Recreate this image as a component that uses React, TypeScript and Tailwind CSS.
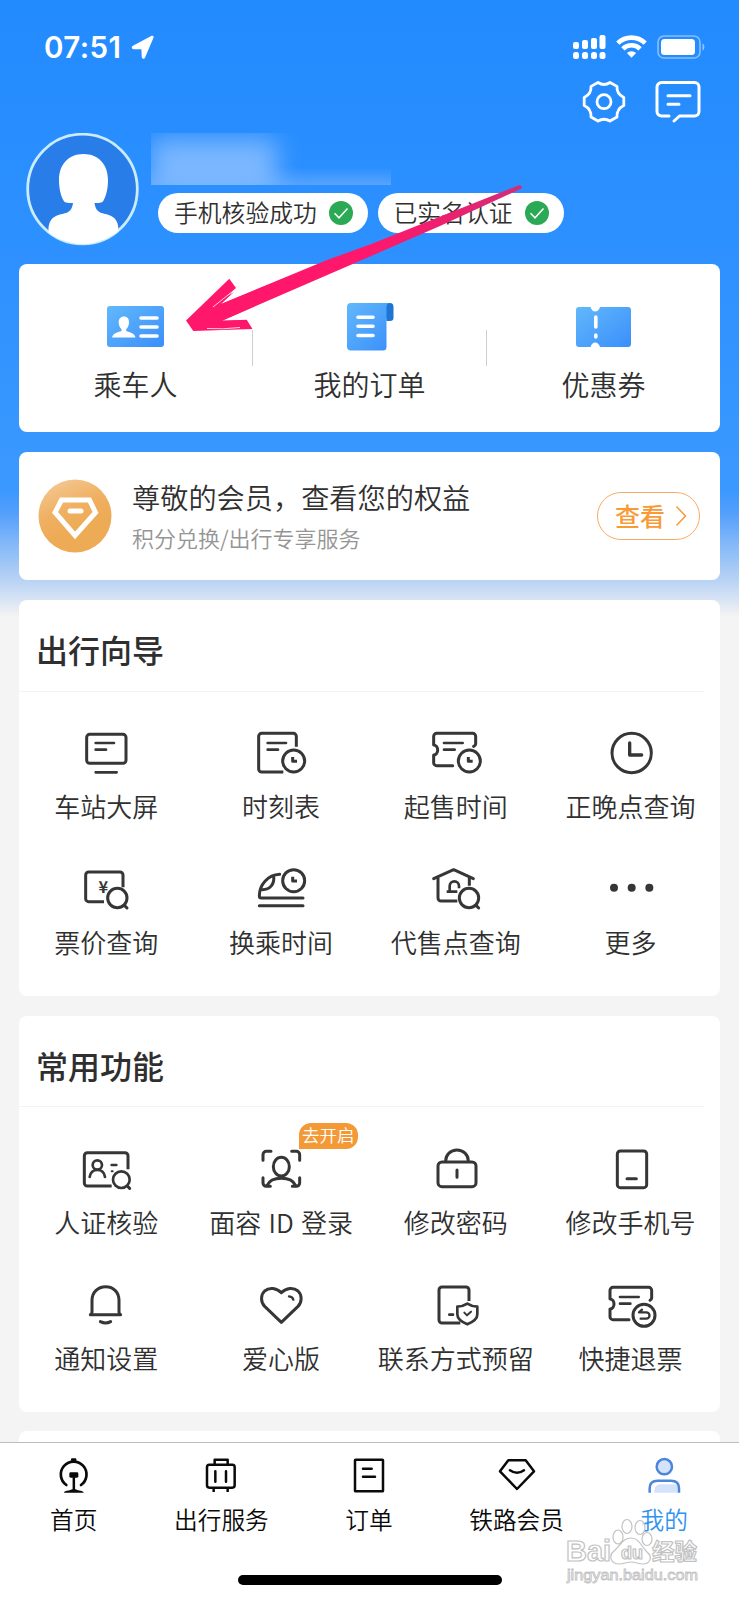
import React from 'react';

interface IconItem {
    label: string;
    icon: React.ReactNode;
    badge?: string;
}

const FONT = "font-['Noto_Sans_CJK_SC',sans-serif]";

/* ---------- Line icons of the feature grids ---------- */

const GridIcon: React.FC<{ children: React.ReactNode }> = ({ children }) => (
    <svg
        className="h-14 w-16 shrink-0"
        viewBox="0 0 192 168"
        fill="none"
        stroke="#363636"
        strokeWidth="9"
        strokeLinecap="round"
        strokeLinejoin="round"
    >
        {children}
    </svg>
);

const SmallClock: React.FC<{ cx: number; cy: number }> = ({ cx, cy }) => (
    <>
        <circle cx={cx} cy={cy} r="33" />
        <path d={`M${cx - 3} ${cy - 12}v13h13`} strokeLinecap="butt" />
    </>
);

const StationIcon = () => (
    <GridIcon>
        <rect x="38" y="28" width="118" height="87" rx="9" />
        <path strokeWidth="8" d="M65 54h55M65 74h31M65 142h63" />
    </GridIcon>
);

const TimetableIcon = () => (
    <GridIcon>
        <path strokeLinecap="butt" d="M142 65V34a9 9 0 0 0-9-9H38a9 9 0 0 0-9 9v98a9 9 0 0 0 9 9h65" />
        <path strokeWidth="8" d="M56 54h55M56 74h31" />
        <SmallClock cx={134} cy={108} />
    </GridIcon>
);

const SaleTimeIcon = () => (
    <GridIcon>
        <path d="M86 122H38a9 9 0 0 1-9-9V90C45 89 45 61 29 60V34a9 9 0 0 1 9-9h108a9 9 0 0 1 9 9v23q0 4-6 7" />
        <path strokeWidth="8" d="M60 54h56M60 74h32" />
        <SmallClock cx={136} cy={108} />
    </GridIcon>
);

const ClockIcon = () => (
    <GridIcon>
        <circle cx="98" cy="84" r="59" />
        <path strokeWidth="10" d="M92 54v36h36" />
    </GridIcon>
);

const PriceIcon = () => (
    <GridIcon>
        <path strokeLinecap="butt" d="M147 79V42a9 9 0 0 0-9-9H44a9 9 0 0 0-9 9v71a9 9 0 0 0 9 9h46" />
        <text
            x="88"
            y="95"
            textAnchor="middle"
            fontSize="49"
            fontWeight="700"
            fill="#363636"
            stroke="none"
            className="font-['Noto_Sans_CJK_SC',sans-serif]"
        >
            ¥
        </text>
        <circle cx="130" cy="111" r="29" />
        <path d="M151 133l8 8" />
    </GridIcon>
);

const TrainIcon = () => (
    <GridIcon>
        <path d="M92 40C56 42 31 72 31 104q0 7 6 7h125M31 134h131" />
        <path d="M74 46c3 22-10 41-36 40" />
        <SmallClock cx={134} cy={59} />
    </GridIcon>
);

const AgencyIcon = () => (
    <GridIcon>
        <path d="M29 53l60-27 59 27" />
        <path strokeLinecap="butt" d="M42 50v61a9 9 0 0 0 9 9h49M136 50v24" />
        <path strokeWidth="8" strokeLinecap="butt" d="M68 92h32M77 90V75a14 14 0 0 1 28 0v7" />
        <circle cx="135" cy="111" r="29" />
        <path d="M156 133l8 8" />
    </GridIcon>
);

const MoreIcon = () => (
    <GridIcon>
        <g fill="#363636" stroke="none">
            <circle cx="45" cy="80" r="12" />
            <circle cx="98" cy="80" r="12" />
            <circle cx="151" cy="80" r="12" />
        </g>
    </GridIcon>
);

const IdCheckIcon = () => (
    <GridIcon>
        <path strokeLinecap="butt" d="M162 85V44a9 9 0 0 0-9-9H40a9 9 0 0 0-9 9v82a9 9 0 0 0 9 9h73" />
        <circle cx="70" cy="72" r="14" strokeWidth="8" />
        <path strokeWidth="8" d="M47 108c2-13 11-21 23-21s21 8 23 21M113 72h14" />
        <path strokeWidth="6" d="M113 91h3" />
        <circle cx="142" cy="116" r="25" strokeWidth="8" />
        <path d="M160 135l7 7" />
    </GridIcon>
);

const FaceIdIcon = () => (
    <GridIcon>
        <path d="M42 58V41a10 10 0 0 1 10-10h14M128 31h14a10 10 0 0 1 10 10v17M42 110v16a10 10 0 0 0 10 10h12M130 136h12a10 10 0 0 0 10-10v-16" />
        <ellipse cx="97" cy="77" rx="24" ry="28" />
        <path d="M54 134c6-14 22-22 43-22s37 8 43 22" />
    </GridIcon>
);

const LockIcon = () => (
    <GridIcon>
        <rect x="42" y="63" width="114" height="74" rx="12" />
        <path d="M65 60c0-19 15-33 34-33s34 14 34 33M99 87v22" />
    </GridIcon>
);

const PhoneIcon = () => (
    <GridIcon>
        <rect x="55" y="30" width="88" height="110" rx="9" />
        <path d="M84 113h28" />
    </GridIcon>
);

const BellIcon = () => (
    <GridIcon>
        <path d="M49 113c3-1 5-4 5-9V70c0-23 17-41 41-41s40 18 40 41v34c0 5 2 8 5 9zM79 134q16 8 31 0" />
    </GridIcon>
);

const HeartIcon = () => (
    <GridIcon>
        <path d="M97 136L47 88C34 75 35 53 47 42c14-12 35-10 50 5 15-15 36-17 50-5 12 11 13 33 0 46z" />
        <path strokeWidth="7" d="M120 58q11 1 13 10" />
    </GridIcon>
);

const ContactIcon = () => (
    <GridIcon>
        <path strokeLinecap="butt" d="M135 72V39a9 9 0 0 0-9-9H54a9 9 0 0 0-9 9v90a9 9 0 0 0 9 9h55" />
        <path strokeWidth="8" d="M76 113h11" />
        <path strokeWidth="8" d="M130 80q14 9 30 9v23q0 18-30 30-30-12-30-30V89q16 0 30-9z" />
        <path strokeWidth="6" d="M121 107l8 8 12-11" />
    </GridIcon>
);

const RefundIcon = () => (
    <GridIcon>
        <path d="M90 128H42a9 9 0 0 1-9-9V96c16-1 16-29 0-30V40a9 9 0 0 1 9-9h107a9 9 0 0 1 9 9v23q0 4-5 7" />
        <path strokeWidth="8" d="M63 60h56M63 80h31" />
        <circle cx="135" cy="115" r="33" />
        <path strokeWidth="7" d="M120 106h22a9 9 0 0 1 0 19h-17M120 106l9-8" />
    </GridIcon>
);

/* ---------- Tab bar icons ---------- */

const TabIcon: React.FC<{ children: React.ReactNode }> = ({ children }) => (
    <svg
        className="h-10 w-12 shrink-0"
        viewBox="0 0 144 120"
        fill="none"
        stroke="#0a0a0a"
        strokeWidth="7.500"
        strokeLinecap="round"
        strokeLinejoin="round"
    >
        {children}
    </svg>
);

const HomeTab = () => (
    <TabIcon>
        <path strokeWidth="8" d="M49 90A38.500 38.500 0 1 1 93 90" />
        <rect x="63" y="10" width="16" height="9" rx="3" fill="#0a0a0a" stroke="none" />
        <rect x="58" y="52" width="27" height="16" rx="4" fill="#0a0a0a" stroke="none" />
        <path d="M71.500 66v40" />
        <path fill="#0a0a0a" stroke="none" d="M42 113c0-6 16-5 24-10h11c8 5 24 4 24 10z" />
    </TabIcon>
);

const LuggageTab = () => (
    <TabIcon>
        <rect x="30" y="29" width="83" height="69" rx="7" />
        <path d="M53 28V14h39v14M55 49v31M87 49v31" />
        <path strokeLinecap="butt" d="M50 99v12M92 99v12" />
    </TabIcon>
);

const OrderTab = () => (
    <TabIcon>
        <rect x="30" y="14" width="84" height="95" rx="2" />
        <path d="M54 41h26M54 65h36" />
    </TabIcon>
);

const DiamondTab = () => (
    <TabIcon>
        <path d="M46 16h52l25 33-51 53L21 49z" />
        <path d="M51 46q21 15 42 0" />
    </TabIcon>
);

const MineTab = () => (
    <TabIcon>
        <g stroke="#4a86dc">
            <circle cx="73" cy="35" r="23" fill="#d5e3fa" />
            <path fill="#d5e3fa" stroke="none" d="M43 113v-8q2-17 20-17h50v25z" />
            <path strokeLinecap="butt" d="M29 113V99q0-22 24-22h40q24 0 24 22v14" />
        </g>
    </TabIcon>
);

/* ---------- Data ---------- */

const guideItems: IconItem[] = [
    { label: '车站大屏', icon: <StationIcon /> },
    { label: '时刻表', icon: <TimetableIcon /> },
    { label: '起售时间', icon: <SaleTimeIcon /> },
    { label: '正晚点查询', icon: <ClockIcon /> },
    { label: '票价查询', icon: <PriceIcon /> },
    { label: '换乘时间', icon: <TrainIcon /> },
    { label: '代售点查询', icon: <AgencyIcon /> },
    { label: '更多', icon: <MoreIcon /> },
];

const commonItems: IconItem[] = [
    { label: '人证核验', icon: <IdCheckIcon /> },
    { label: '面容 ID 登录', icon: <FaceIdIcon />, badge: '去开启' },
    { label: '修改密码', icon: <LockIcon /> },
    { label: '修改手机号', icon: <PhoneIcon /> },
    { label: '通知设置', icon: <BellIcon /> },
    { label: '爱心版', icon: <HeartIcon /> },
    { label: '联系方式预留', icon: <ContactIcon /> },
    { label: '快捷退票', icon: <RefundIcon /> },
];

const tabs: IconItem[] = [
    { label: '首页', icon: <HomeTab /> },
    { label: '出行服务', icon: <LuggageTab /> },
    { label: '订单', icon: <OrderTab /> },
    { label: '铁路会员', icon: <DiamondTab /> },
    { label: '我的', icon: <MineTab /> },
];

/* ---------- Header ---------- */

const StatusBar = () => (
    <div className="flex h-[72px] items-start justify-between pt-[29px] pr-[34px] pl-11 text-white">
        <div className="flex items-center gap-[9px]">
            <span className="font-['Inter',sans-serif] text-[29.500px] leading-9 font-[560] tracking-[0.400px]">07:51</span>
            <svg className="h-6 w-6" viewBox="0 0 24 24" fill="currentColor" stroke="currentColor" strokeWidth="1.500" strokeLinejoin="round">
                <path d="M22 1.500c.6-.3 1.100.2.900.8l-8.500 19.900c-.5 1.100-1.800.9-1.900-.3l-.4-8.300-8.500-.2c-1.300-.1-1.500-1.400-.3-1.900z" />
            </svg>
        </div>
        <div className="flex items-center pt-1.5">
            <svg className="h-6 w-[33px]" viewBox="0 0 33 24" fill="currentColor">
                <rect x="0" y="7" width="6" height="7" rx="2" />
                <rect x="9" y="5" width="6" height="9" rx="2" />
                <rect x="18" y="3" width="6" height="11" rx="2" />
                <rect x="26.500" y="0" width="6" height="14" rx="2" />
                <rect x="0" y="17" width="6" height="7" rx="2.500" />
                <rect x="9" y="17" width="6" height="7" rx="2.500" />
                <rect x="18" y="17" width="6" height="7" rx="2.500" />
                <rect x="26.500" y="17" width="6" height="7" rx="2.500" />
            </svg>
            <svg className="ml-2.5 h-6 w-[31px]" viewBox="0 0 31 24" fill="none" stroke="currentColor" strokeWidth="4.600">
                <path d="M1.800 8.200a19.500 19.500 0 0 1 27.400 0" />
                <path d="M6.900 13.800a12.300 12.300 0 0 1 17.200 0" />
                <path fill="currentColor" stroke="none" d="M15.500 22.800l-4.600-4.700a6.600 6.600 0 0 1 9.200 0z" />
            </svg>
            <svg className="ml-2.5 h-6 w-12" viewBox="0 0 48 24">
                <rect x="1" y="1" width="42" height="22" rx="6" fill="none" stroke="#fff" strokeOpacity=".45" strokeWidth="1.600" />
                <rect x="4" y="4" width="34" height="16" rx="3.500" fill="#fff" />
                <path d="M45.500 8.500v7c2.500-1 2.500-6 0-7z" fill="#fff" fillOpacity=".5" />
            </svg>
        </div>
    </div>
);

const HeaderActions = () => (
    <div className="flex h-[61px] items-start justify-end gap-7 pt-[7px] pr-[38px]">
        <svg className="h-[46px] w-[46px]" viewBox="0 0 46 46" fill="none" stroke="#fff" strokeWidth="2.800" strokeLinejoin="round">
            <path d="M17 3.500 Q23 7.500 29 3.500 L36 7.400 Q35.500 15 42.800 18.500 V26.500 Q35.500 30 36 38 L29 42 Q23 38.500 17 42 L10 38 Q10.500 30 3.200 26.500 V18.500 Q10.500 15 10 7.400 Z" />
            <circle cx="23" cy="22.700" r="7" />
        </svg>
        <svg className="h-[46px] w-[46px]" viewBox="0 0 46 46" fill="none" stroke="#fff" strokeWidth="3" strokeLinecap="round" strokeLinejoin="round">
            <path d="M14 37H6.500a4.500 4.500 0 0 1-4.500-4.500V8a4.500 4.500 0 0 1 4.500-4.500h33A4.500 4.500 0 0 1 44 8v24.500a4.500 4.500 0 0 1-4.500 4.500H24.500L19 42" />
            <path d="M13 16.700h22M13 25.300h11" />
        </svg>
    </div>
);

const VerifiedPill: React.FC<{ label: string; className: string }> = ({ label, className }) => (
    <div className={`flex h-10 items-center justify-between rounded-full bg-white pr-[15px] pl-4 ${className}`}>
        <span className="-mt-0.5 text-[23.800px] leading-10 font-[350] whitespace-nowrap text-[#303030]">{label}</span>
        <svg className="h-6 w-6 shrink-0" viewBox="0 0 24 24" fill="none">
            <circle cx="12" cy="12" r="12" fill="#2ba955" />
            <path d="M5.500 12.200l4.500 4.600 8.500-9.300" stroke="#fff" strokeWidth="1.500" />
        </svg>
    </div>
);

const Profile = () => (
    <div className="flex h-[131px] items-start pl-[26px]">
        <svg className="h-[113px] w-[113px] shrink-0" viewBox="0 0 113 113">
            <defs>
                <clipPath id="avatar">
                    <circle cx="56.500" cy="56" r="55" />
                </clipPath>
            </defs>
            <circle cx="56.500" cy="56" r="54.800" fill="#287de9" stroke="#c9ecff" strokeWidth="2.800" />
            <path
                clipPath="url(#avatar)"
                fill="#fff"
                d="M57.500 21C42 21 33 32 33 47c0 9 2 16 4.500 20.500 1 2 3 2.500 9.500 2.500-1 7-4 9.500-9 10.500-9 2-15.500 4.500-15.500 17V113h70V97.500c0-12.500-6.500-15-15-17-5-1-8-3.500-9-10.500 6.500 0 8-.5 9-2.500C80 63 82 56 82 47c0-15-9-26-24.500-26z"
            />
        </svg>
        <div className="ml-3 flex flex-col gap-2">
            <div className="h-[52px] w-60 overflow-hidden bg-[linear-gradient(180deg,transparent_65%,#57a4ff)]">
                <div className="mt-1.5 h-14 w-[126px] rounded-lg bg-[#84bbff]/90 blur-[12px]" />
            </div>
            <div className="ml-[7px] flex gap-[9.500px]">
                <VerifiedPill label="手机核验成功" className="w-[210px]" />
                <VerifiedPill label="已实名认证" className="w-[186px]" />
            </div>
        </div>
    </div>
);

/* ---------- Cards ---------- */

const shortcuts: IconItem[] = [
    {
        label: '乘车人',
        icon: (
            <svg className="h-12 w-[57px]" viewBox="0 0 57 48">
                <rect y="3" width="57" height="41" rx="3" fill="url(#blue)" />
                <path fill="#fff" d="M17 13.500c-3.500 0-5.500 2.500-5.300 6.200.2 3 1.200 5.200 2.800 6.300v2C10.500 29.500 6 30 5 34.500h23.500c-1-4.500-5.500-5-9.300-6.500v-2c1.600-1.100 2.600-3.300 2.800-6.300.2-3.700-1.500-6.200-5-6.200z" />
                <path stroke="#fff" strokeWidth="3.600" strokeLinecap="round" d="M34 15h16M34 24h16M34 33h16" />
            </svg>
        ),
    },
    {
        label: '我的订单',
        icon: (
            <svg className="h-12 w-12" viewBox="0 0 48 48">
                <path fill="#1f75d3" d="M38 0h6q3.500 0 3.500 4v11q0 3-3.500 3h-3.500z" />
                <path fill="url(#blue)" d="M5 0h39q-3.500 0-3.500 4v40q0 3.500-3.500 3.500H5q-4 0-4-4V4q0-4 4-4z" />
                <path stroke="#fff" strokeWidth="3.600" strokeLinecap="round" d="M12 14.300h15M12 23.300h15M12 32.500h15" />
            </svg>
        ),
    },
    {
        label: '优惠券',
        icon: (
            <svg className="h-12 w-[55px]" viewBox="0 0 55 48">
                <path fill="url(#blue)" d="M3 4h11.500q1.500 4.500 4.700 4.500T24 4h28q3 0 3 3v34q0 3-3 3H24q-1.500-4.500-4.800-4.500T14.500 44H3q-3 0-3-3V7q0-3 3-3z" />
                <path stroke="#fff" strokeWidth="3.600" strokeLinecap="round" d="M19.800 14v10M19.800 32v2" />
            </svg>
        ),
    },
];

const ShortcutCard = () => (
    <section className="flex h-[168px] items-center rounded-lg bg-white">
        {shortcuts.map((item, i) => (
            <React.Fragment key={item.label}>
                {i > 0 && <div className="h-9 w-px shrink-0 bg-[#cfcfcf]" />}
                <div className="flex h-full flex-1 flex-col items-center pt-[39px]">
                    {item.icon}
                    <span className="mt-[15px] text-[28px] leading-9 font-[350] text-[#303030]">{item.label}</span>
                </div>
            </React.Fragment>
        ))}
    </section>
);

const MemberCard = () => (
    <section className="mt-5 flex h-32 items-center rounded-lg bg-white pr-5 pl-[19px]">
        <svg className="h-[74px] w-[74px] shrink-0" viewBox="0 0 74 74" fill="none">
            <defs>
                <linearGradient id="gold" x1="0.200" y1="0" x2="0.500" y2="0.700">
                    <stop offset="0" stopColor="#f4c894" />
                    <stop offset="0.600" stopColor="#efb061" />
                    <stop offset="1" stopColor="#eeab56" />
                </linearGradient>
            </defs>
            <circle cx="37" cy="37" r="36.500" fill="url(#gold)" />
            <path d="M23.500 21h28l6 12.500L37 56.500 17 33.500z" stroke="#fff" strokeWidth="5" />
            <path d="M32 32h11" stroke="#fff" strokeWidth="5" strokeLinecap="round" />
        </svg>
        <div className="ml-5 flex flex-1 flex-col pt-0.5">
            <span className="text-[28.200px] leading-10 font-[350] whitespace-nowrap text-[#303030]">尊敬的会员，查看您的权益</span>
            <span className="text-[22px] leading-10 font-[350] whitespace-nowrap text-[#959595]">积分兑换/出行专享服务</span>
        </div>
        <button className="flex h-12 w-[103px] shrink-0 items-center rounded-full border-[1.500px] border-[#f9ab66] pl-[17px] text-[#f89a35]">
            <span className="-mt-0.5 text-[25px] leading-10 font-medium whitespace-nowrap">查看</span>
            <svg className="ml-2.5 h-6 w-3" viewBox="0 0 12 24" fill="none" stroke="currentColor" strokeWidth="1.500">
                <path d="M1.500 2.500L10.500 12l-9 9.500" />
            </svg>
        </button>
    </section>
);

const FeatureCard: React.FC<{ title: string; items: IconItem[] }> = ({ title, items }) => (
    <section className="h-[396px] shrink-0 rounded-lg bg-white">
        <h2 className="h-[90.500px] pt-[25px] pl-[17px] text-[32px] leading-[48px] font-medium text-[#2f2f2f]">{title}</h2>
        <div className="mr-4 h-px bg-[#f3f3f3]" />
        <div className="grid w-[699px] grid-cols-4 pt-[33.500px]">
            {items.map((item) => (
                <div key={item.label} className="relative flex h-[136.400px] flex-col items-center">
                    {item.icon}
                    <span className="mt-[5px] text-[26px] leading-10 font-[350] [word-spacing:1.500px] whitespace-nowrap text-[#303030]">
                        {item.label}
                    </span>
                    {item.badge && (
                        <span className="absolute -top-[18px] left-[105px] flex h-[26px] w-[59px] items-center justify-center rounded-[12px] rounded-bl-none bg-[#f39a37] text-[17.500px] font-[350] whitespace-nowrap text-white">
                            {item.badge}
                        </span>
                    )}
                </div>
            ))}
        </div>
    </section>
);

/* ---------- Bottom navigation ---------- */

const TabBar = () => (
    <nav className="flex h-[158px] flex-col items-center border-t border-[#bdbdbd] bg-white">
        <div className="flex h-[132px] w-[738px] self-start pt-3">
            {tabs.map((tab) => (
                <div
                    key={tab.label}
                    className={`flex flex-1 flex-col items-center ${tab.label === '我的' ? 'text-[#3093ef]' : 'text-[#0a0a0a]'}`}
                >
                    {tab.icon}
                    <span className="mt-[3.500px] text-[23.700px] leading-10 font-[350] whitespace-nowrap">{tab.label}</span>
                </div>
            ))}
        </div>
        <div className="h-2.5 w-[264px] rounded-full bg-black" />
    </nav>
);

const Watermark = () => (
    <svg className="absolute top-[1516px] left-[562px] h-[76px] w-[144px]" viewBox="0 0 144 76">
        <g fill="#fff" fillOpacity=".8" stroke="#c2c2c2" strokeWidth="1.200" className="font-['Liberation_Sans',sans-serif]">
            <text x="4" y="45" fontSize="29" fontWeight="700" textLength="45" lengthAdjust="spacingAndGlyphs">Bai</text>
            <path d="M69 22c8 0 10 8 16 14 6 5 3 12-4 12-5 0-7-2-12-2s-7 2-12 2c-8 0-11-8-5-13 6-5 9-13 17-13z" />
            <ellipse cx="56" cy="21" rx="5" ry="7" />
            <ellipse cx="65" cy="10.500" rx="5" ry="7" />
            <ellipse cx="78" cy="11.500" rx="5" ry="7" />
            <ellipse cx="85" cy="23" rx="5" ry="6.500" />
            <text x="59" y="43" fontSize="18" fontWeight="700">du</text>
            <text x="90" y="44" fontSize="22.500" fontWeight="700" className="font-['Noto_Sans_CJK_SC',sans-serif]">经验</text>
            <text x="5" y="64" fontSize="14" strokeWidth=".8" textLength="131" lengthAdjust="spacingAndGlyphs">jingyan.baidu.com</text>
        </g>
    </svg>
);

const PointerArrow = () => (
    <svg className="pointer-events-none absolute top-[170px] left-[170px] h-[180px] w-[370px]" viewBox="170 170 370 180">
        <defs>
            <linearGradient id="pink" gradientUnits="userSpaceOnUse" x1="360" y1="250" x2="522" y2="185">
                <stop offset="0" stopColor="#ff176b" />
                <stop offset="0.500" stopColor="#ee1f6f" />
                <stop offset="1" stopColor="#cf2f78" />
            </linearGradient>
        </defs>
        <path
            fill="url(#pink)"
            d="M186 320.500L229.300 278.700L236 288L220 304.500L327 260L370 244.500L519.500 185Q523 186 521.500 188.500L440 226L370 256.500L222 320.700L246.700 319.700L252.500 329L193.300 331Z"
        />
        <path fill="#ff176b" d="M190 320L234 292L221 304L290 276L286 292L222 320.700L246 320L240 327L195 329Z" />
        <path fill="none" stroke="#fff" strokeWidth=".8" d="M213 307L235.500 289M207 328.500q16 1 33-1" />
    </svg>
);

export default function App() {
    return (
        <div className={`relative flex h-[1600px] w-[739px] flex-col overflow-hidden bg-[#f4f4f4] ${FONT}`}>
            <svg className="absolute h-0 w-0" aria-hidden="true">
                <defs>
                    <linearGradient id="blue" x1="0" y1="0" x2="1" y2="1">
                        <stop offset="0" stopColor="#62b8fb" />
                        <stop offset="1" stopColor="#3a8ffb" />
                    </linearGradient>
                </defs>
            </svg>

            <main className="h-[1442px] overflow-hidden bg-[linear-gradient(180deg,#228bfe_0px,#2d90ff_240px,#3897ff_440px,#3b98ff_490px,#549ffb_513px,#85b9f8_545px,#b5d1f5_578px,#d5e2f4_598px,#f4f4f4_617px)]">
                <StatusBar />
                <HeaderActions />
                <Profile />
                <div className="ml-[19px] flex w-[701px] flex-col">
                    <ShortcutCard />
                    <MemberCard />
                    <div className="mt-5 flex flex-col gap-[19.500px]">
                        <FeatureCard title="出行向导" items={guideItems} />
                        <FeatureCard title="常用功能" items={commonItems} />
                        <section className="h-20 rounded-lg bg-white" />
                    </div>
                </div>
            </main>

            <TabBar />
            <Watermark />
            <PointerArrow />
        </div>
    );
}
